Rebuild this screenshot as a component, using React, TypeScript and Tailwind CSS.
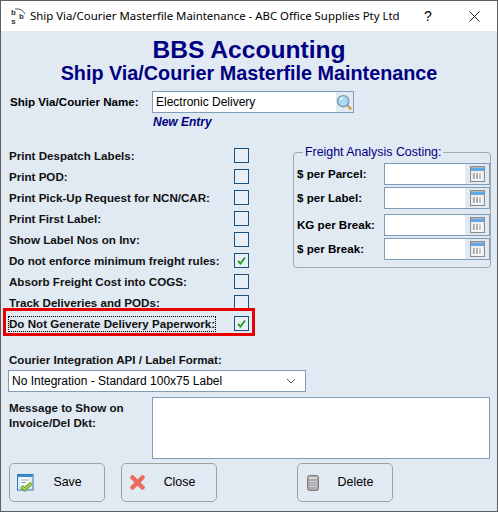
const fieldBorder = "border border-[#7f9db9]";

function SearchIcon() {
  return (
    <svg width="19" height="19" viewBox="0 0 19 19">
      <circle cx="8" cy="8" r="6.2" fill="#a8dcf5" stroke="#7e97a8" strokeWidth="1.6" />
      <path d="M4.5 7 A4 4 0 0 1 8 3.8" fill="none" stroke="#e8f8ff" strokeWidth="1.6" />
      <path d="M12.5 12.5 L15 15" stroke="#8a8f94" strokeWidth="2" />
      <path d="M14.5 14.5 L17 17" stroke="#d9a441" strokeWidth="3" />
    </svg>
  );
}

function CalcIcon() {
  return (
    <svg width="15" height="16" viewBox="0 0 15 16">
      <rect x="0.5" y="0.5" width="14" height="15" fill="#eeeeee" stroke="#8c8c8c" />
      <rect x="1" y="1" width="13" height="1" fill="#b5b5b5" />
      <rect x="1" y="2" width="13" height="3" fill="#62a8e6" />
      <rect x="3" y="7" width="9" height="7" fill="#ffffff" />
      <path d="M3 8h2M6 8h2M3 10h2M6 10h2M3 12h2M6 12h2" stroke="#5f5f5f" />
      <path d="M9 8h2" stroke="#e08a3a" />
      <path d="M9 10h2M9 12h2" stroke="#4f8fd0" />
    </svg>
  );
}

function Check() {
  return (
    <svg width="9" height="9" viewBox="0 0 9 9">
      <path d="M1 5 L3.5 7.5 L8 1.5" fill="none" stroke="#2aa02a" strokeWidth="2" />
    </svg>
  );
}

function SaveIcon() {
  return (
    <svg width="17" height="18" viewBox="0 0 17 18">
      <rect x="0.5" y="0.5" width="15.5" height="15.5" fill="#dfeaf6" stroke="#2f78b8" />
      <rect x="1" y="1" width="14.5" height="2" fill="#3d8fd0" />
      <rect x="3" y="4" width="10" height="7" fill="#ffffff" />
      <path d="M4 6h8M4 8.5h5" stroke="#8aa0b5" />
      <path d="M4.5 12.5 L7.5 15.5 L14.5 9" fill="none" stroke="#4d8a1f" strokeWidth="3.5" />
      <path d="M4.5 12.5 L7.5 15.5 L14.5 9" fill="none" stroke="#a5d64a" strokeWidth="2" />
    </svg>
  );
}

function CloseIcon() {
  return (
    <svg width="15" height="15" viewBox="0 0 15 15">
      <path d="M2.5 2.5 L12.5 12.5 M12.5 2.5 L2.5 12.5" stroke="#ee6a5c" strokeWidth="4.5" strokeLinecap="round" />
    </svg>
  );
}

function DeleteIcon() {
  return (
    <svg width="12" height="16" viewBox="0 0 12 16">
      <rect x="0.5" y="0.5" width="11" height="15" rx="2" fill="#a9a9a9" stroke="#7d7d7d" />
      <rect x="2" y="2" width="8" height="2" fill="#d8d8d8" />
      <path d="M3 6.5h1.5M5.5 6.5h1.5M8 6.5h1.5M3 9h1.5M5.5 9h1.5M8 9h1.5M3 11.5h1.5M5.5 11.5h1.5M8 11.5h1.5" stroke="#eee" />
    </svg>
  );
}

function LogoIcon() {
  return (
    <svg width="17" height="22" viewBox="0 0 17 22">
      <text x="1" y="10" fontSize="8" fontFamily="Liberation Mono, monospace" fontWeight="bold" fill="#333">b</text>
      <text x="9" y="14" fontSize="8" fontFamily="Liberation Mono, monospace" fontWeight="bold" fill="#333">b</text>
      <text x="1" y="18.5" fontSize="8" fontFamily="Liberation Mono, monospace" fontWeight="bold" fill="#333">s</text>
      <path d="M5 4 Q12 3 15 9" fill="none" stroke="#555" />
    </svg>
  );
}

const leftChecks = [
  { label: "Print Despatch Labels:", checked: false },
  { label: "Print POD:", checked: false },
  { label: "Print Pick-Up Request for NCN/CAR:", checked: false },
  { label: "Print First Label:", checked: false },
  { label: "Show Label Nos on Inv:", checked: false },
  { label: "Do not enforce minimum freight rules:", checked: true },
  { label: "Absorb Freight Cost into COGS:", checked: false },
  { label: "Track Deliveries and PODs:", checked: false },
];

const costFields = [
  { label: "$ per Parcel:", mt: "mt-[4px]" },
  { label: "$ per Label:", mt: "mt-[2px]" },
  { label: "KG per Break:", mt: "mt-[5px]" },
  { label: "$ per Break:", mt: "mt-[2px]" },
];

function Box({ checked }: { checked: boolean }) {
  return (
    <span className="flex h-[15px] w-[15px] shrink-0 items-center justify-center border border-[#1c5180] bg-[#e9eff6]">
      {checked && <Check />}
    </span>
  );
}

function ActionButton({ icon, label }: { icon: React.ReactNode; label: string }) {
  return (
    <button className="flex h-[39px] w-[96px] items-center rounded-[5px] border border-[#a0a0a0] pl-[6px]">
      <span className="flex w-[18px] justify-center">{icon}</span>
      <span className="flex-1 pr-[3px] text-center text-[12.4px] text-black">{label}</span>
    </button>
  );
}

export default function App() {
  return (
    <div className="flex h-[512px] w-[498px] flex-col overflow-hidden border border-[#5f5f5f] bg-[#e1e9f3] font-['Liberation_Sans',sans-serif]">
      <div className="flex h-[30px] shrink-0 items-center bg-white pl-[9px] text-black">
        <LogoIcon />
        <span className="ml-[3px] flex-1 font-['Noto_Sans',sans-serif] text-[11.4px] whitespace-nowrap">Ship Via/Courier Masterfile Maintenance - ABC Office Supplies Pty Ltd</span>
        <span className="w-[46px] text-center text-[14px]">?</span>
        <span className="flex w-[46px] justify-center">
          <svg width="11" height="11" viewBox="0 0 11 11">
            <path d="M0.5 0.5 L10.5 10.5 M10.5 0.5 L0.5 10.5" stroke="#222" />
          </svg>
        </span>
      </div>

      <div className="flex flex-1 flex-col">
        <div className="mt-[6px] text-center text-[24.6px] leading-[26px] font-bold text-[#000080]">BBS Accounting</div>
        <div className="text-center text-[19.8px] leading-[21px] font-bold text-[#000080]">Ship Via/Courier Masterfile Maintenance</div>

        <div className="mt-[7px] flex items-center pl-[9px]">
          <span className="w-[142px] text-[11.6px] font-bold text-black">Ship Via/Courier Name:</span>
          <div className={`flex h-[22px] w-[202px] items-center justify-between bg-white pl-[3px] ${fieldBorder}`}>
            <span className="text-[12px] text-black">Electronic Delivery</span>
            <span className="flex h-full w-[17px] items-center justify-center bg-[#e1e9f3]"><SearchIcon /></span>
          </div>
        </div>
        <div className="mt-[1px] pl-[152px] text-[12px] leading-[17px] font-bold text-[#000080] italic">New Entry</div>

        <div className="mt-[14px] flex">
          <div className="w-[285px] pl-[8px]">
            {leftChecks.map((row) => (
              <div key={row.label} className="flex h-[21px] items-center justify-between pr-[37px]">
                <span className="text-[11.6px] font-bold text-[#111]">{row.label}</span>
                <Box checked={row.checked} />
              </div>
            ))}
            <div className="relative flex h-[21px] items-center justify-between pr-[37px]">
              <span className="text-[11.6px] leading-[14px] font-bold text-[#111] outline-1 outline-black outline-dotted">Do Not Generate Delivery Paperwork:</span>
              <Box checked />
              <div className="absolute top-[-5px] left-[-6px] h-[28px] w-[252px] border-[3px] border-[#e80000]" />
            </div>
          </div>

          <fieldset className="ml-[7px] h-[123px] w-[198px] rounded-[4px] border border-[#a8a8a8] pl-[3px]">
            <legend className="ml-[6px] px-[2px] text-[12.4px] leading-[14px] text-[#000080]">Freight Analysis Costing:</legend>
            {costFields.map((f) => (
              <div key={f.label} className={`flex items-center ${f.mt}`}>
                <span className="w-[87px] text-[11.6px] font-bold text-black">{f.label}</span>
                <div className={`flex h-[22px] w-[106px] justify-end bg-white ${fieldBorder}`}>
                  <span className="flex w-[24px] items-center justify-center bg-[#e1e9f3]"><CalcIcon /></span>
                </div>
              </div>
            ))}
          </fieldset>
        </div>

        <div className="mt-[18px] pl-[8px] text-[11.6px] leading-[15px] font-bold text-[#111]">Courier Integration API / Label Format:</div>
        <div className={`mt-[3px] ml-[7px] flex h-[22px] w-[298px] items-center justify-between bg-white pr-[9px] pl-[3px] ${fieldBorder}`}>
          <span className="text-[12px] text-black">No Integration - Standard 100x75 Label</span>
          <svg width="10" height="6" viewBox="0 0 10 6"><path d="M1 1 L5 5 L9 1" fill="none" stroke="#555" /></svg>
        </div>

        <div className="mt-[5px] flex pl-[8px]">
          <div className="w-[143px] pt-[3px] text-[11.6px] leading-[15px] font-bold text-[#111]">Message to Show on<br />Invoice/Del Dkt:</div>
          <div className={`h-[62px] w-[338px] bg-white ${fieldBorder}`} />
        </div>

        <div className="mt-[4px] flex pl-[8px]">
          <ActionButton icon={<SaveIcon />} label="Save" />
          <div className="ml-[16px]"><ActionButton icon={<CloseIcon />} label="Close" /></div>
          <div className="ml-[80px]"><ActionButton icon={<DeleteIcon />} label="Delete" /></div>
        </div>
      </div>
    </div>
  );
}
